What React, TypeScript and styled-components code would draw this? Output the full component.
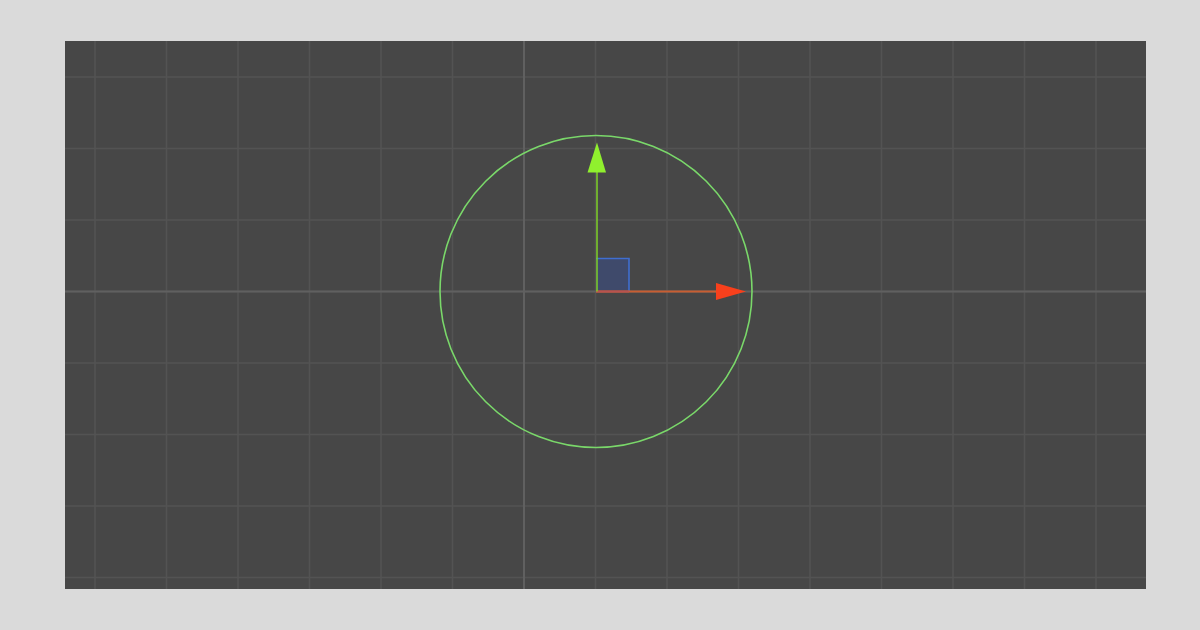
import React from 'react';
import styled, { createGlobalStyle } from 'styled-components';

const GlobalStyle = createGlobalStyle`
  html, body {
    margin: 0;
    padding: 0;
    background: #dadada;
    font-family: "Liberation Sans", Arial, sans-serif;
  }
`;

const W = 1081;
const H = 548;
// scene origin in panel coords
const OX = 531;
const OY = 250.5;
const STEP = 71.5;

const Page = styled.div`
  width: 1200px;
  height: 630px;
  padding: 41px 0 0 65px;
  box-sizing: border-box;
`;

const SceneView = styled.div`
  width: ${W}px;
  height: ${H}px;
  background: #474747;
  overflow: hidden;

  svg {
    display: block;
  }
`;

const gridLines = () => {
  const xs: number[] = [];
  const ys: number[] = [];
  for (let x = OX - 7 * STEP - 72; x < W; x += STEP) if (x > 0) xs.push(x);
  for (let y = OY - 4 * STEP; y < H; y += STEP) if (y > 0) ys.push(y);
  return { xs, ys };
};

const SceneGizmo = () => {
  const { xs, ys } = gridLines();
  const cx = OX;
  const cy = OY;
  return (
    <svg width={W} height={H} viewBox={`0 0 ${W} ${H}`}>
      {xs.map((x) => (
        <line key={'x' + x} x1={x} y1={0} x2={x} y2={H} stroke="#535353" strokeWidth={1.5} />
      ))}
      {ys.map((y) => (
        <line key={'y' + y} x1={0} y1={y} x2={W} y2={y} stroke="#535353" strokeWidth={1.5} />
      ))}
      {/* world axes */}
      <line x1={459} y1={0} x2={459} y2={H} stroke="#606060" strokeWidth={2} />
      <line x1={0} y1={cy} x2={W} y2={cy} stroke="#606060" strokeWidth={2} />

      {/* circle collider */}
      <circle cx={cx} cy={cy} r={156} fill="none" stroke="#7ad86a" strokeWidth={1.6} />

      {/* rect handle */}
      <rect x={cx} y={cy - 33} width={33} height={33} fill="#3f4a6b" />
      <path d={`M${cx} ${cy - 33} H${cx + 33} V${cy}`} fill="none" stroke="#3f6ed0" strokeWidth={1.6} />

      {/* x axis */}
      <line x1={cx} y1={cy} x2={cx + 122} y2={cy} stroke="#c85e32" strokeWidth={2} />
      <line x1={cx} y1={cy} x2={cx + 33} y2={cy} stroke="#b9524f" strokeWidth={2} />
      <polygon points={`${cx + 150},${cy} ${cx + 120},${cy - 8.5} ${cx + 120},${cy + 8.5}`} fill="#f8401c" />

      {/* y axis */}
      <line x1={cx + 1} y1={cy} x2={cx + 1} y2={cy - 122} stroke="#7ed027" strokeWidth={1.5} />
      <polygon points={`${cx + 1},${cy - 149} ${cx - 8.5},${cy - 119} ${cx + 10},${cy - 119}`} fill="#90f02e" />
    </svg>
  );
};

const App = () => (
  <Page>
    <GlobalStyle />
    <SceneView>
      <SceneGizmo />
    </SceneView>
  </Page>
);

export default App;
